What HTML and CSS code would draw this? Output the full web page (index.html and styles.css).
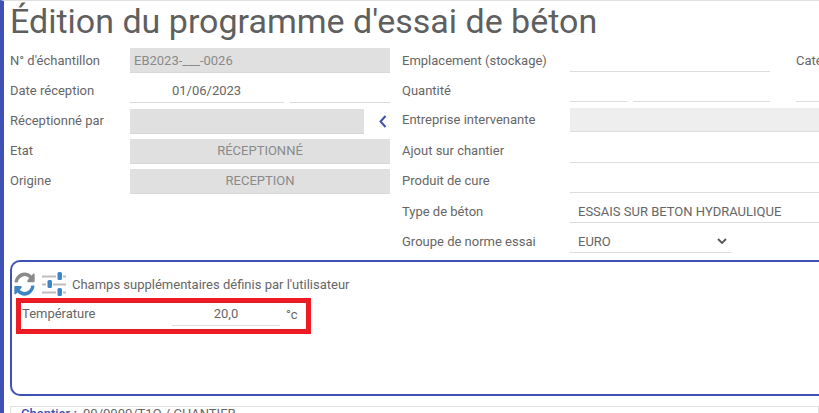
FILE: index.html
```html
<!DOCTYPE html>
<html lang="fr">
<head>
<meta charset="utf-8">
<title>Édition du programme d'essai de béton</title>
<link rel="stylesheet" href="styles.css">
</head>
<body>
<div class="page">
  <h1 class="title">Édition du programme d'essai de béton</h1>
  <div class="form">
    <div class="col col-left">
      <div class="row"><span class="lbl">N° d'échantillon</span><div class="fld grey left">EB2023-___-0026</div></div>
      <div class="row"><span class="lbl">Date réception</span><div class="split"><div class="fld line date">01/06/2023</div><div class="fld line"></div></div></div>
      <div class="row"><span class="lbl up">Réceptionné par</span><div class="fld grey short"></div>
        <svg class="chev" width="8" height="13" viewBox="0 0 8 13"><path d="M6.500 1 L1.500 6.500 L6.500 12" fill="none" stroke="#3f51b5" stroke-width="2"/></svg></div>
      <div class="row"><span class="lbl up">Etat</span><div class="fld grey center up">RÉCEPTIONNÉ</div></div>
      <div class="row"><span class="lbl up">Origine</span><div class="fld grey center up">RECEPTION</div></div>
    </div>
    <div class="col col-right">
      <div class="row"><span class="lbl wide">Emplacement (stockage)</span><div class="fld line empl"></div><span class="lbl cate">Catégorie</span></div>
      <div class="row"><span class="lbl wide">Quantité</span><div class="fld line qty"></div><div class="fld line unit"></div><div class="fld line extra"></div></div>
      <div class="row"><span class="lbl wide up">Entreprise intervenante</span><div class="fld pale full"></div></div>
      <div class="row"><span class="lbl wide up">Ajout sur chantier</span><div class="fld line full"></div></div>
      <div class="row"><span class="lbl wide up">Produit de cure</span><div class="fld line full"></div></div>
      <div class="row"><span class="lbl wide">Type de béton</span><div class="fld line full text">ESSAIS SUR BETON HYDRAULIQUE</div></div>
      <div class="row"><span class="lbl wide">Groupe de norme essai</span><div class="fld line sel text">EURO
        <svg class="caret" width="10" height="6" viewBox="0 0 10 6"><path d="M1 1 L5 5 L9 1" fill="none" stroke="#555" stroke-width="1.8"/></svg></div></div>
    </div>
  </div>
  <section class="panel">
    <div class="panel-head">
      <svg class="sync" width="21" height="24" viewBox="0 0 512 512" preserveAspectRatio="none">
        <path fill="#8a8a8a" d="M370.72 133.28C339.458 104.008 298.888 87.962 255.848 88c-77.458.068-144.328 53.178-162.791 126.85-1.344 5.363-6.122 9.15-11.651 9.15H24.103c-7.498 0-13.194-6.807-11.807-14.176C33.933 94.924 134.813 8 256 8c66.448 0 126.791 26.136 171.315 68.685L463.03 40.97C478.149 25.851 504 36.559 504 57.941V192c0 13.255-10.745 24-24 24H345.941c-21.382 0-32.09-25.851-16.971-40.971l41.75-41.749z"/>
        <path fill="#3d85c6" d="M32 296h134.059c21.382 0 32.09 25.851 16.971 40.971l-41.75 41.75c31.262 29.273 71.835 45.319 114.876 45.28 77.418-.07 144.315-53.144 162.787-126.849 1.344-5.363 6.122-9.15 11.651-9.15h57.304c7.498 0 13.194 6.807 11.807 14.176C478.067 417.076 377.187 504 256 504c-66.448 0-126.791-26.136-171.315-68.685L48.97 471.03C33.851 486.149 8 475.441 8 454.059V320c0-13.255 10.745-24 24-24z"/>
      </svg>
      <svg class="sliders" width="24" height="24" viewBox="0 0 24 24">
        <path d="M0 4.500H14M21 4.500H24M0 12.500H4M11 12.500H24M0 20.500H14M21 20.500H24" stroke="#bdbdbd" stroke-width="2" fill="none"/>
        <rect x="15.500" y="0" width="4.500" height="8" rx="1.500" fill="#3d85c6"/>
        <rect x="5.500" y="8" width="4.500" height="8" rx="1.500" fill="#3d85c6"/>
        <rect x="15.500" y="16" width="4.500" height="8" rx="1.500" fill="#3d85c6"/>
      </svg>
      <span class="panel-title">Champs supplémentaires définis par l'utilisateur</span>
    </div>
    <div class="highlight">
      <span class="temp-lbl">Température</span>
      <div class="temp-val">20,0</div>
      <span class="temp-unit">°c</span>
    </div>
  </section>
  <div class="foot"><b>Chantier :</b> 00/0000/T1Q / CHANTIER</div>
</div>
</body>
</html>
```
FILE: styles.css
```css
html, body { margin: 0; padding: 0; height: 100%; overflow: hidden; background: #fff; }
body { font-family: Roboto, "Liberation Sans", sans-serif; color: #666; font-size: 13px; }
.page {
  width: 819px; height: 413px; box-sizing: border-box; overflow: hidden;
  border-left: 4px solid #3f51b5; border-top: 1px solid #e0e0e0; padding-left: 6px;
}
.title { margin: 0 0 6px; font-size: 34px; font-weight: 400; line-height: 41px; color: #5f5f5f; white-space: nowrap; }
.form { display: flex; height: 212px; }
.col { display: flex; flex-direction: column; }
.col-left { width: 392px; flex: none; }
.col-right { flex: 1; min-width: 0; }
.row { display: flex; align-items: stretch; height: 25px; margin-bottom: 5.25px; white-space: nowrap; }
.col-right .row { height: 24px; margin-bottom: 6.2px; }
.lbl { width: 120px; flex: none; line-height: 25px; }
.lbl.wide { width: 168px; }
.lbl.cate { width: auto; margin-left: 26px; }
.fld { box-sizing: border-box; line-height: 25px; flex: none; width: 260px; }
.lbl.up, .fld.up { line-height: 23px; }
.grey { background: #e0e0e0; color: #8a8a8a; border-bottom: 1px solid #d8d8d8; }
.left { padding-left: 4px; }
.center { text-align: center; }
.short { width: 234px; }
.chev { margin: 6px 0 0 15px; }
.split { display: flex; gap: 6px; width: 260px; }
.line { border-bottom: 1px solid #ddd; }
.split .line { width: 100px; }
.split .date { width: 154px; padding-left: 42px; }
.empl { width: 200px; }
.qty { width: 57px; }
.unit { width: 137px; margin-left: 6px; }
.extra { width: 30px; margin-left: 26px; }
.pale { background: #eee; border-bottom: 1px solid #ddd; }
.full { width: 260px; }
.text { padding-left: 8px; color: #666; }
.sel { width: 161px; position: relative; }
.caret { position: absolute; right: 4px; top: 9px; }
.panel {
  box-sizing: border-box; width: 812px; height: 136px; padding: 9px 0 0 2px;
  border: 2px solid #3f51b5; border-right: 0; border-radius: 10px 0 0 10px;
}
.panel-head { display: flex; align-items: center; height: 26px; }
.sliders { margin-left: 7px; }
.panel-title { margin-left: 6px; }
.highlight {
  box-sizing: border-box; width: 295px; height: 36px; margin: 1px 0 0 2px;
  border: 5px solid #ed1c24; display: flex; align-items: flex-start; padding-left: 1px;
}
.temp-lbl { width: 150px; flex: none; line-height: 22px; }
.temp-val { width: 108px; flex: none; box-sizing: border-box; height: 23px; text-align: center; line-height: 22px; border-bottom: 1px solid #ddd; }
.temp-unit { margin-left: 6px; line-height: 23px; }
.foot { margin-top: 10px; border: 1px solid #e0e0e0; padding: 0 0 0 10px; line-height: 14px; height: 30px; box-sizing: border-box; }
.foot b { color: #3f51b5; font-weight: 500; margin-right: 3px; }
```
